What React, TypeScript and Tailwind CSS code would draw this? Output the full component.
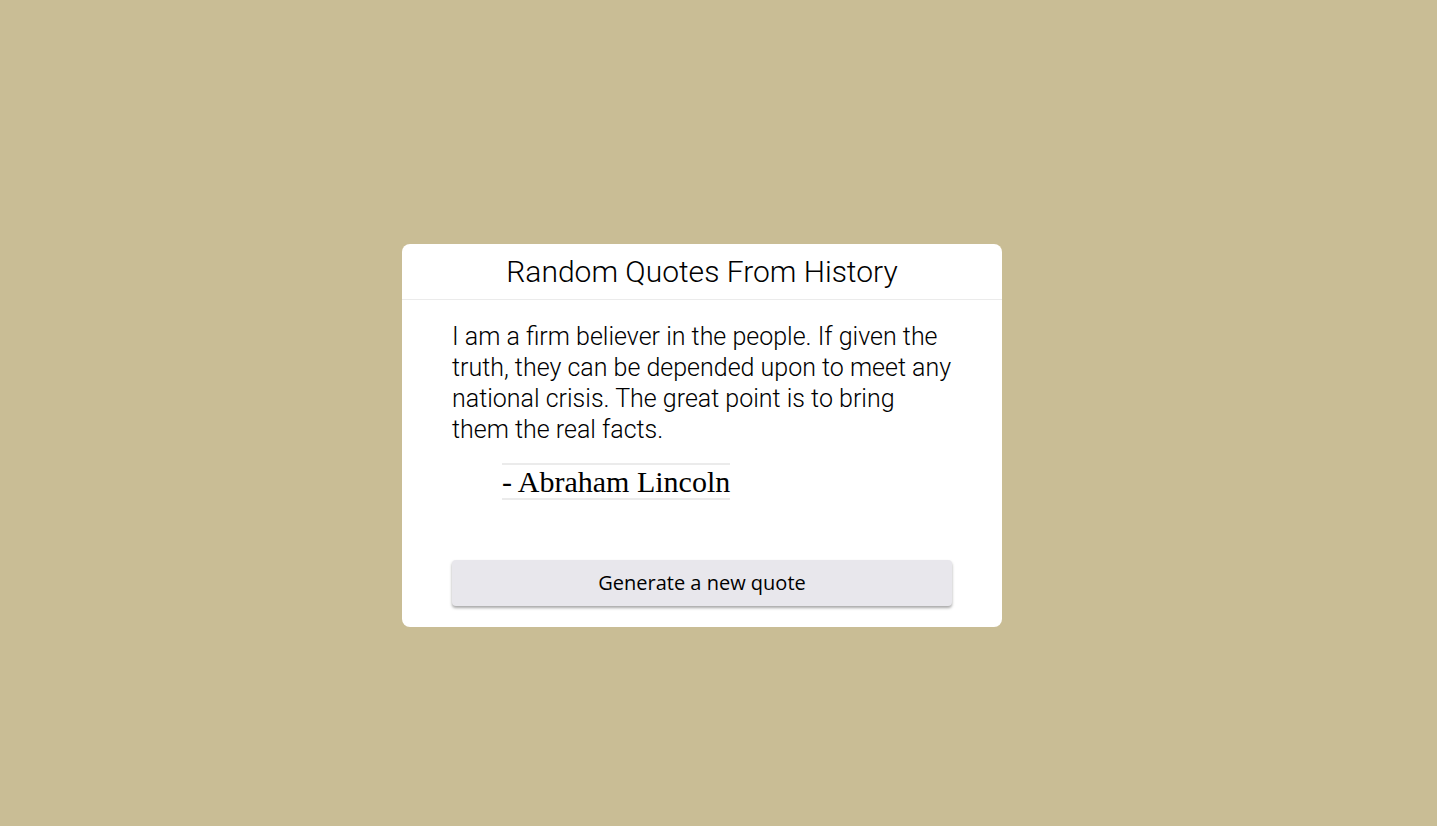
import React from "react";

export default function App() {
  return (
    <div className="min-h-[826px] w-full bg-[#c9bd95] flex justify-center pt-[244px] pr-[33px]">
      <div className="w-[600px] h-[383px] bg-white rounded-[8px] flex flex-col">
        <div className="h-[56px] flex items-center justify-center border-b border-[#ebebeb]">
          <h1 className="text-[30px] font-light text-black" style={{ fontFamily: "Roboto, sans-serif" }}>
            Random Quotes From History
          </h1>
        </div>
        <div className="px-[50px] pt-[21px] flex flex-col">
          <p className="text-[25px] leading-[31px] font-light text-black" style={{ fontFamily: "Roboto, sans-serif" }}>
            I am a firm believer in the people. If given the truth, they can be depended upon to meet any national crisis. The great point is to bring them the real facts.
          </p>
          <div className="mt-[18px] ml-[50px] self-start border-y-2 border-[#ebebeb] h-[37px] flex items-center">
            <span className="text-[30px] leading-none text-black" style={{ fontFamily: '"Liberation Serif", serif' }}>
              - Abraham Lincoln
            </span>
          </div>
          <button
            className="mt-[60px] h-[46px] w-full rounded-[4px] bg-[#e8e7ec] text-[20px] text-black shadow-[0_2px_3px_rgba(0,0,0,0.35)]"
            style={{ fontFamily: '"Open Sans", sans-serif' }}
          >
            Generate a new quote
          </button>
        </div>
      </div>
    </div>
  );
}
